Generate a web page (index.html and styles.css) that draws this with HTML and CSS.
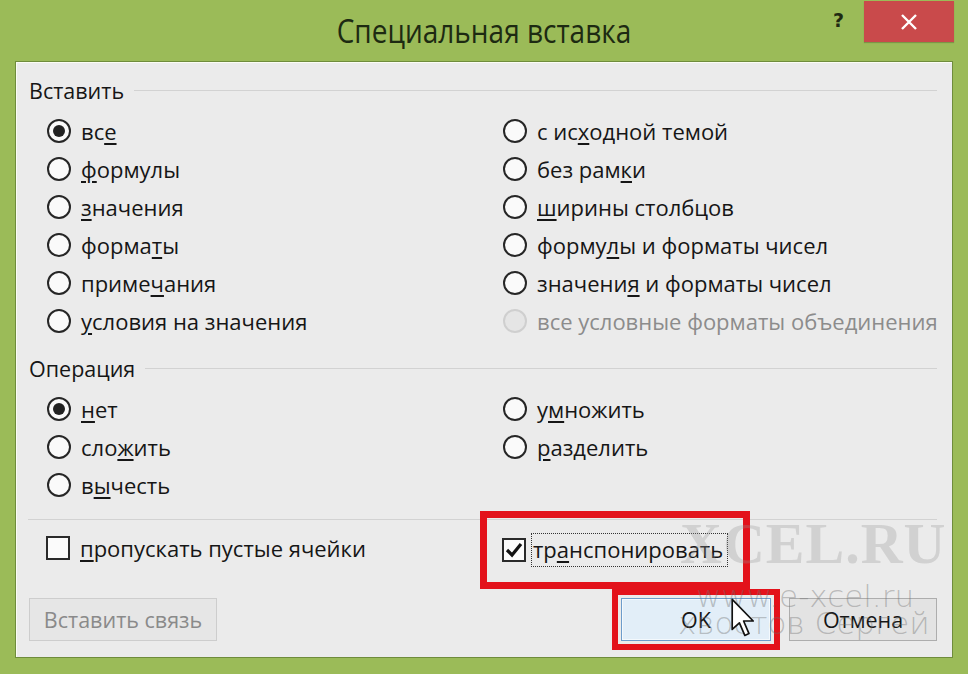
FILE: index.html
```html
<!DOCTYPE html>
<html lang="ru">
<head>
  <meta charset="UTF-8" />
  <title>Специальная вставка</title>
  <link rel="stylesheet" href="styles.css">
</head>
<body>
  <div class="dialog">
    <header class="titlebar">
      <h1 class="title">Специальная вставка</h1>
      <div class="controls">
        <span class="help">?</span>
        <span class="close">
          <svg width="18" height="18" viewBox="0 0 18 18"><path d="M2 2 L16 16 M16 2 L2 16" stroke="#fff" stroke-width="2.4" fill="none"/></svg>
        </span>
      </div>
    </header>

    <main class="panel">
      <div class="group-title">Вставить</div>
      <div class="options">
        <label class="opt"><span class="radio checked"></span><span>вс<u>е</u></span></label>
        <label class="opt"><span class="radio"></span><span>с ис<u>х</u>одной темой</span></label>
        <label class="opt"><span class="radio"></span><span><u>ф</u>ормулы</span></label>
        <label class="opt"><span class="radio"></span><span>без рам<u>к</u>и</span></label>
        <label class="opt"><span class="radio"></span><span><u>з</u>начения</span></label>
        <label class="opt"><span class="radio"></span><span><u>ш</u>ирины столбцов</span></label>
        <label class="opt"><span class="radio"></span><span>форма<u>т</u>ы</span></label>
        <label class="opt"><span class="radio"></span><span>форму<u>л</u>ы и форматы чисел</span></label>
        <label class="opt"><span class="radio"></span><span>приме<u>ч</u>ания</span></label>
        <label class="opt"><span class="radio"></span><span>значени<u>я</u> и форматы чисел</span></label>
        <label class="opt"><span class="radio"></span><span><u>у</u>словия на значения</span></label>
        <label class="opt disabled"><span class="radio"></span><span>все условные форматы объединения</span></label>
      </div>

      <div class="group-title op-title">Операция</div>
      <div class="options">
        <label class="opt"><span class="radio checked"></span><span><u>н</u>ет</span></label>
        <label class="opt"><span class="radio"></span><span>у<u>м</u>ножить</span></label>
        <label class="opt"><span class="radio"></span><span>сло<u>ж</u>ить</span></label>
        <label class="opt"><span class="radio"></span><span><u>р</u>азделить</span></label>
        <label class="opt"><span class="radio"></span><span>в<u>ы</u>честь</span></label>
      </div>

      <div class="checks">
        <label class="opt"><span class="checkbox"></span><span><u>п</u>ропускать пустые ячейки</span></label>
        <label class="opt marked"><span class="checkbox">
          <svg width="18" height="16" viewBox="0 0 18 16"><path d="M2 8 L7 13 L16 2" stroke="#111" stroke-width="3.2" fill="none"/></svg>
        </span><span class="focus">тр<u>а</u>нспонировать</span></label>
      </div>

      <div class="buttons">
        <button class="btn" disabled>Вставить связь</button>
        <div class="btn-group">
          <button class="btn primary marked-btn">OK</button>
          <button class="btn">Отмена</button>
        </div>
      </div>

      <div class="wm-logo">XCEL.RU</div>
      <div class="wm-site">www.e-xcel.ru</div>
      <div class="wm-author">хвостов Сергей</div>
      <svg class="cursor" width="24" height="40" viewBox="0 0 20 33">
        <path d="M1 1 L1 26 L7 20.5 L11.5 31 L15 29.5 L10.5 19 L18.5 19 Z" fill="#fff" stroke="#111" stroke-width="1.4" stroke-linejoin="round"/>
      </svg>
    </main>
  </div>
</body>
</html>
```

FILE: styles.css
```css
* {
  box-sizing: border-box;
}
html, body {
  margin: 0;
  height: 674px;
  overflow: hidden;
}
body {
  background-color: #9bbb58;
  font-family: "Open Sans", "Noto Sans", sans-serif;
  color: #161616;
}
.dialog {
  width: 968px;
  height: 674px;
  padding: 0 15px 16px;
  display: flex;
  flex-direction: column;
}

/* title bar */
.titlebar {
  height: 61px;
  display: grid;
  grid-template-columns: 1fr auto 1fr;
  margin: 0 -15px;
}
.title {
  grid-column: 2;
  margin: 0;
  padding-top: 11px;
  font-size: 28px;
  font-weight: 400;
  color: #1d2a12;
  transform: scaleY(1.15);
}
.controls {
  justify-self: end;
  display: flex;
  align-items: flex-start;
  margin-right: 14px;
  margin-top: 1px;
}
.help {
  font-family: "DejaVu Sans", sans-serif;
  font-weight: bold;
  font-size: 19px;
  color: #1f2a12;
  margin-right: 20px;
  margin-top: 8px;
}
.close {
  width: 90px;
  height: 41px;
  background-color: #c94a4b;
  display: flex;
  align-items: center;
  justify-content: center;
  box-shadow: 0 1px 1px rgba(0,0,0,0.2);
}

/* main panel */
.panel {
  position: relative;
  flex: 1;
  background-color: #ebebeb;
  border: 1px solid #6f8c3c;
  box-shadow: inset 1px 1px 0 #fbfdf4;
  padding: 13px 15px 0 13px;
}
.group-title {
  display: flex;
  align-items: center;
  gap: 10px;
  font-size: 21.5px;
  height: 30px;
}
.group-title::after {
  content: "";
  flex: 1;
  border-top: 1px solid #d2d2d2;
}
.op-title {
  margin-top: 13px;
}
.options {
  display: grid;
  grid-template-columns: 456px 1fr;
  grid-auto-rows: 38px;
  padding-left: 18px;
  margin-top: 7px;
}
.opt {
  display: flex;
  align-items: center;
  gap: 10px;
  font-size: 22px;
  white-space: nowrap;
}
.opt u {
  text-underline-offset: 3px;
}
.radio {
  width: 24px;
  height: 24px;
  border-radius: 50%;
  border: 2px solid #262626;
  background-color: #fafafa;
  display: flex;
  align-items: center;
  justify-content: center;
  flex-shrink: 0;
}
.radio.checked::after {
  content: "";
  width: 12px;
  height: 12px;
  border-radius: 50%;
  background-color: #222;
}
.opt.disabled {
  color: #8c8c8c;
}
.opt.disabled .radio {
  border-color: #cfcfcf;
  background-color: #e5e5e5;
}

.checks {
  display: grid;
  grid-template-columns: 456px auto;
  justify-content: start;
  margin-top: 15px;
  padding: 13px 0 0 18px;
  border-top: 1px solid #d2d2d2;
  height: 64px;
  margin-left: -1px;
  align-items: start;
}
.checkbox {
  width: 24px;
  height: 24px;
  border: 2px solid #2a2a2a;
  background-color: #fbfbfb;
  display: flex;
  align-items: center;
  justify-content: center;
  flex-shrink: 0;
}
.marked {
  gap: 5px;
  outline: 7px solid #e3121b;
  outline-offset: 15px;
}
.focus {
  border: 1px dotted #333;
  padding: 0 4px 2px 1px;
}

/* buttons */
.buttons {
  display: flex;
  justify-content: space-between;
  align-items: center;
  margin-top: 15px;
}
.btn {
  font-family: "Open Sans", "Noto Sans", sans-serif;
  font-size: 21.5px;
  height: 43px;
  border: 1px solid #adadad;
  background-color: #e3e3e3;
  color: #161616;
  padding: 0 10px;
}
.btn[disabled] {
  width: 188px;
  color: #8a8a8a;
  border-color: #cdcdcd;
  background-color: #e6e6e6;
}
.btn-group {
  display: flex;
  gap: 18px;
}
.btn-group .btn {
  width: 148px;
}
.btn.primary {
  background-color: #e2eef8;
  border-color: #6d9ccb;
  box-shadow: inset 0 0 0 1px #f4f9fd;
  width: 150px;
}
.marked-btn {
  outline: 6px solid #e3121b;
  outline-offset: 3px;
}

/* watermark + pointer overlay */
.wm-logo {
  position: absolute;
  left: 664px;
  top: 448px;
  font-family: "Liberation Serif", serif;
  font-weight: bold;
  font-size: 58px;
  color: rgba(150, 150, 150, 0.3);
  letter-spacing: 1px;
}
.wm-site,
.wm-author {
  position: absolute;
  font-family: "DejaVu Sans", sans-serif;
  font-weight: 200;
  font-size: 31px;
  color: rgba(110, 110, 110, 0.4);
}
.wm-site {
  left: 680px;
  top: 516px;
}
.wm-author {
  left: 662px;
  top: 543px;
}
.cursor {
  position: absolute;
  left: 715px;
  top: 536px;
}
```
